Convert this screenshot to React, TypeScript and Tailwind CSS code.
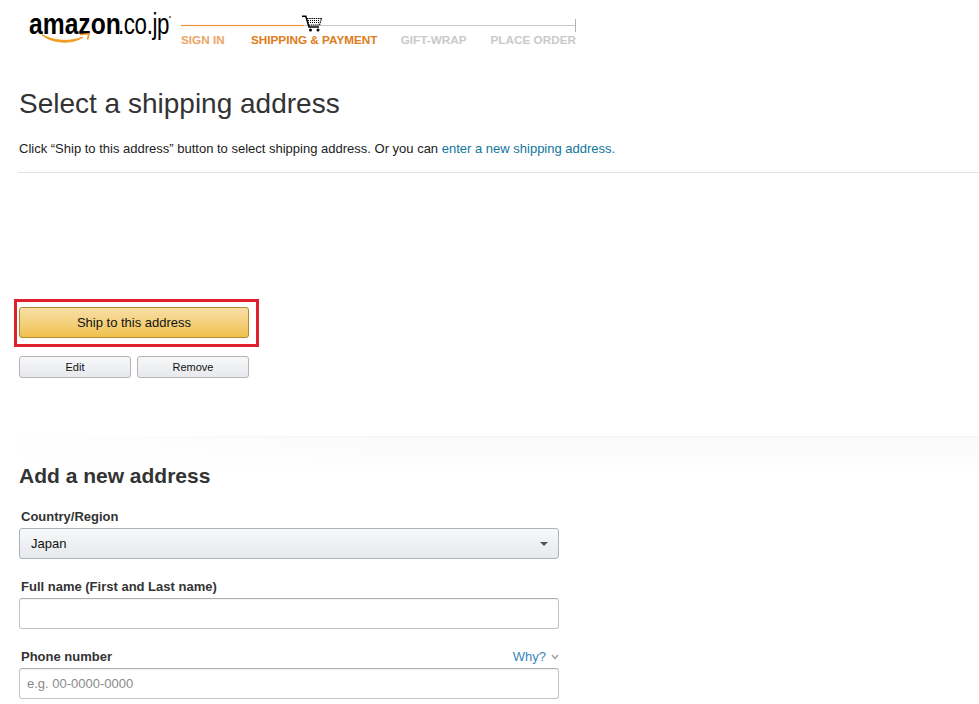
const inputClass =
  "block w-full h-[31px] rounded-[3px] border border-[#c4c4c4] border-t-[#b0b0b0] px-[7px] text-[13px] text-[#111] placeholder:text-[#8a8a8a] shadow-[inset_0_1px_1px_rgba(0,0,0,0.05)] outline-none";

const Logo = () => (
  <div className="relative w-[152px] h-[48px] shrink-0 text-black select-none">
    <span className="absolute left-0 top-0 text-[29px] leading-[34px] font-bold origin-left scale-x-[0.85] whitespace-nowrap">
      amazon
    </span>
    <span className="absolute left-[89px] top-0 text-[29px] leading-[34px] origin-left scale-x-[0.77] tracking-[-0.5px] whitespace-nowrap">
      .co.jp
    </span>
    <span className="absolute left-[140px] top-[9px] w-[2px] h-[2px] rounded-full bg-[#555]" />
    <svg className="absolute left-[12px] top-[26px]" width="50" height="12" viewBox="0 0 50 12">
      <path d="M0.500 1.500C12 8 29 9.500 42 4C33 11 12 11.500 0.500 1.500Z" fill="#f09a1f" stroke="#f09a1f" strokeWidth="1" />
      <path d="M39 1.500L48 0.800L46.500 6.500" fill="none" stroke="#f09a1f" strokeWidth="1.600" />
    </svg>
  </div>
);

const Cart = () => (
  <svg className="absolute left-[120px] -top-[10px]" width="22" height="17" viewBox="0 0 22 17">
    <path d="M1 1.200H4.800L8 12H18" fill="none" stroke="#000" strokeWidth="1.500" />
    <path d="M6 3.500H20.500L18.500 10H8" fill="none" stroke="#000" strokeWidth="1.200" strokeDasharray="1.500 0.700" />
    <path d="M7 5.500H19M7 7.500H19" stroke="#000" strokeWidth="1" strokeDasharray="1 1" />
    <circle cx="9.500" cy="15" r="1.500" fill="#000" />
    <circle cx="17" cy="15" r="1.500" fill="#000" />
  </svg>
);

const Progress = () => (
  <div className="w-[395px] pt-[18px]">
    <div className="relative flex">
      <div className="w-[123px] border-t border-[#e8912e] shadow-[0_0_1px_#f0b070]" />
      <div className="flex-1 border-t border-[#c8c8c8]" />
      <div className="absolute right-0 -top-[6px] w-[1px] h-[13px] bg-[#b5b5b5]" />
      <Cart />
    </div>
    <div className="flex mt-[7px] text-[11.75px] leading-[14px] font-bold whitespace-nowrap">
      <span className="w-[70px] text-[#eba565]">SIGN IN</span>
      <span className="w-[150px] text-[#e07b1a]">SHIPPING &amp; PAYMENT</span>
      <span className="w-[90px] text-[#c9c9c9]">GIFT-WRAP</span>
      <span className="text-[#c9c9c9]">PLACE ORDER</span>
    </div>
  </div>
);

export default function App() {
  return (
    <div className="h-[704px] overflow-hidden bg-white font-['Liberation_Sans',Arial,sans-serif] text-[#333]">
      <header className="flex pl-[29px] pt-[7px] h-[86px]">
        <Logo />
        <Progress />
      </header>

      <main className="pl-[19px]">
        <h1 className="text-[28px] leading-[36px] font-normal text-[#333]">Select a shipping address</h1>
        <p className="mt-[18px] text-[13px] leading-[18px] text-[#222]">
          Click “Ship to this address” button to select shipping address. Or you can{" "}
          <a className="text-[#0f769c]">enter a new shipping address.</a>
        </p>
        <div className="-ml-[1px] mt-[14px] h-[1px] bg-[#e4e4e4]" />

        <div className="mt-[126px] -ml-[5px] w-[245px] border-[3px] border-[#e0202c] pl-[2px] pt-[5px] pb-[6px]">
          <button className="block w-[230px] h-[31px] rounded-[3px] border border-[#b38b2e] bg-gradient-to-b from-[#f7dfa5] to-[#f0c14b] text-[13px] text-[#111]">
            Ship to this address
          </button>
        </div>
        <div className="flex gap-[6px] mt-[9px] w-[230px]">
          <button className="flex-1 h-[22px] rounded-[3px] border border-[#b4b4b4] bg-gradient-to-b from-[#f7f8fa] to-[#e7e9ec] text-[11px] text-[#111]">
            Edit
          </button>
          <button className="flex-1 h-[22px] rounded-[3px] border border-[#b4b4b4] bg-gradient-to-b from-[#f7f8fa] to-[#e7e9ec] text-[11px] text-[#111]">
            Remove
          </button>
        </div>
      </main>

      <section className="relative mt-[58px] pl-[19px] pt-[26px] bg-[linear-gradient(to_bottom,#f1f1f1_0,#fafafa_2px,#ffffff_40px)]">
        <div className="absolute left-0 top-0 bottom-0 w-[420px] bg-gradient-to-r from-white to-transparent" />
        <div className="relative">
          <h2 className="text-[21px] leading-[28px] font-bold text-[#333]">Add a new address</h2>
          <form className="w-[540px] mt-[17px]">
            <label className="block pl-[2px] text-[13px] leading-[19px] font-bold text-[#333]">Country/Region</label>
            <div className="flex items-center justify-between h-[31px] mt-[2px] rounded-[3px] border border-[#adb1b8] bg-gradient-to-b from-[#f7f8fa] to-[#e7e9ec] pl-[11px] pr-[10px] text-[13px] text-[#111]">
              <span>Japan</span>
              <span className="w-0 h-0 border-x-[4px] border-x-transparent border-t-[4px] border-t-[#555]" />
            </div>

            <label className="block mt-[18px] pl-[2px] text-[13px] leading-[19px] font-bold text-[#333]">
              Full name (First and Last name)
            </label>
            <input className={`${inputClass} mt-[2px]`} />

            <div className="flex justify-between items-center mt-[18px] pl-[2px] leading-[19px]">
              <label className="text-[13px] font-bold text-[#333]">Phone number</label>
              <span className="flex items-center gap-[5px] text-[13px] text-[#3a85b8]">
                Why?
                <svg width="8" height="6" viewBox="0 0 8 6">
                  <path d="M1 1L4 4.500L7 1" fill="none" stroke="#a5a5a5" strokeWidth="1.600" />
                </svg>
              </span>
            </div>
            <input className={`${inputClass} mt-[2px]`} placeholder="e.g. 00-0000-0000" />
          </form>
        </div>
      </section>
    </div>
  );
}
